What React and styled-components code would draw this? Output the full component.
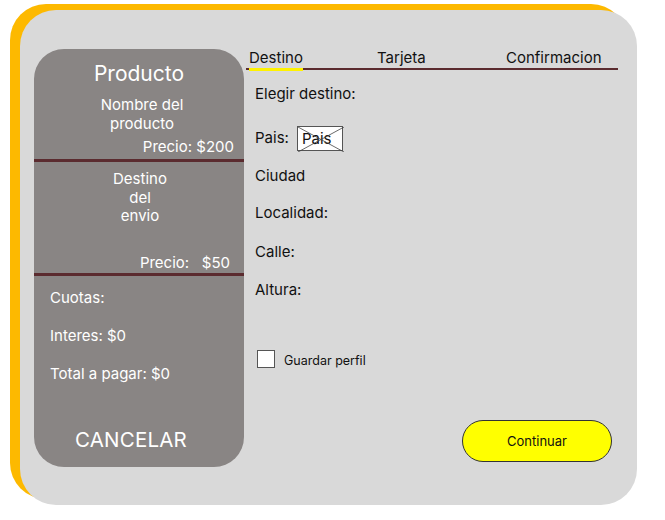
import React from "react";
import styled, { createGlobalStyle } from "styled-components";

const Global = createGlobalStyle`
  html, body { margin: 0; padding: 0; background: #ffffff; }
  body { font-family: Inter, "Noto Sans", Arial, sans-serif; }
`;

const Card = styled.div`
  box-sizing: border-box;
  margin: 10px 0 0 20px;
  width: 617px;
  height: 495px;
  background: #d9d9d9;
  border-radius: 36px;
  box-shadow: -10px -6px 0 #fdb900;
  display: flex;
  padding: 39px 19px 0 14px;
  gap: 2px;
`;

const Summary = styled.aside`
  box-sizing: border-box;
  width: 210px;
  height: 418px;
  background: #898584;
  border-radius: 30px;
  color: #ffffff;
  display: flex;
  flex-direction: column;
  overflow: hidden;
`;

const Section = styled.div`
  box-sizing: border-box;
  height: ${(p) => p.$h}px;
  padding: ${(p) => p.$pad};
  display: flex;
  flex-direction: column;
  border-bottom: ${(p) => (p.$divider ? "3px solid #5b2b2f" : "none")};
`;

const Title = styled.div`
  font-size: 21px;
  line-height: 24px;
  text-align: center;
`;

const Centered = styled.div`
  font-size: 15px;
  line-height: ${(p) => p.$lh || 19}px;
  text-align: center;
  margin-top: ${(p) => p.$mt || 0}px;
  margin-left: ${(p) => p.$ml || 0}px;
`;

const Price = styled.div`
  font-size: 15px;
  line-height: 19px;
  text-align: right;
  margin-top: auto;
  padding-right: ${(p) => p.$pr}px;
  white-space: pre;
`;

const Line = styled.div`
  font-size: 15px;
  line-height: 19px;
  height: 38px;
`;

const Cancel = styled.button`
  margin-top: auto;
  margin-bottom: 15px;
  margin-right: 32px;
  background: none;
  border: none;
  color: #ffffff;
  font-family: inherit;
  font-size: 20.5px;
  line-height: 24px;
  padding: 0;
  text-align: center;
  letter-spacing: 0.2px;
`;

const Main = styled.main`
  flex: 1;
  display: flex;
  flex-direction: column;
  color: #111;
`;

const Tabs = styled.nav`
  display: flex;
  border-bottom: 2px solid #5b2b2f;
  padding-left: 3px;
  height: 19px;
`;

const Tab = styled.div`
  font-size: 15px;
  line-height: 17px;
  width: ${(p) => p.$w}px;
`;

const TabLabel = styled.span`
  display: inline-block;
  position: relative;
  height: 19px;
  &::after {
    content: "";
    display: ${(p) => (p.$active ? "block" : "none")};
    position: absolute;
    left: 0;
    right: 0;
    bottom: -3px;
    height: 3px;
    background: #fff200;
  }
`;

const Form = styled.div`
  padding-left: 9px;
  display: flex;
  flex-direction: column;
`;

const Field = styled.div`
  font-size: 15px;
  line-height: 19px;
  margin-top: ${(p) => p.$mt}px;
  display: flex;
  align-items: center;
  gap: 8px;
`;

const SelectBox = styled.div`
  position: relative;
  box-sizing: border-box;
  width: 46px;
  height: 25px;
  background: #ffffff;
  border: 1px solid #555;
  font-size: 15px;
  line-height: 23px;
  padding-left: 4px;
  margin-top: 2px;
  svg {
    position: absolute;
    inset: 0;
  }
`;

const CheckRow = styled.label`
  display: flex;
  align-items: flex-end;
  gap: 9px;
  margin-top: 51px;
  margin-left: 2px;
  font-size: 12.5px;
  line-height: 15px;
`;

const Box = styled.span`
  width: 18px;
  height: 18px;
  box-sizing: border-box;
  background: #fff;
  border: 1px solid #555;
  display: inline-block;
`;

const Continue = styled.button`
  align-self: flex-end;
  margin-top: 52px;
  margin-right: 6px;
  width: 150px;
  height: 42px;
  border-radius: 21px;
  background: #ffff00;
  border: 1px solid #333;
  font-family: inherit;
  font-size: 13px;
  color: #111;
`;

export default function App() {
  return (
    <>
      <Global />
      <Card>
        <Summary>
          <Section $h={113} $pad="13px 0 3px 0" $divider>
            <Title>Producto</Title>
            <Centered $mt={9} $ml={6}>Nombre del<br />producto</Centered>
            <Price $pr={10}>Precio: $200</Price>
          </Section>
          <Section $h={114} $pad="8px 0 1px 0" $divider>
            <Centered $lh={18.5} $ml={2}>Destino<br />del<br />envio</Centered>
            <Price $pr={14}>{"Precio:   $50"}</Price>
          </Section>
          <Section $h={191} $pad="12px 0 0 16px">
            <Line>Cuotas:</Line>
            <Line>Interes: $0</Line>
            <Line>Total a pagar: $0</Line>
            <Cancel>CANCELAR</Cancel>
          </Section>
        </Summary>
        <Main>
          <Tabs>
            <Tab $w={128}><TabLabel $active>Destino</TabLabel></Tab>
            <Tab $w={129}><TabLabel>Tarjeta</TabLabel></Tab>
            <Tab $w={110}><TabLabel>Confirmacion</TabLabel></Tab>
          </Tabs>
          <Form>
            <Field $mt={14}>Elegir destino:</Field>
            <Field $mt={21}>
              Pais:
              <SelectBox>
                <svg width="46" height="25" viewBox="0 0 46 25">
                  <line x1="0" y1="0" x2="46" y2="25" stroke="#444" strokeWidth="0.8" />
                  <line x1="46" y1="0" x2="0" y2="25" stroke="#444" strokeWidth="0.8" />
                </svg>
                Pais
              </SelectBox>
            </Field>
            <Field $mt={15}>Ciudad</Field>
            <Field $mt={18}>Localidad:</Field>
            <Field $mt={20}>Calle:</Field>
            <Field $mt={19}>Altura:</Field>
            <CheckRow>
              <Box />
              Guardar perfil
            </CheckRow>
            <Continue>Continuar</Continue>
          </Form>
        </Main>
      </Card>
    </>
  );
}
